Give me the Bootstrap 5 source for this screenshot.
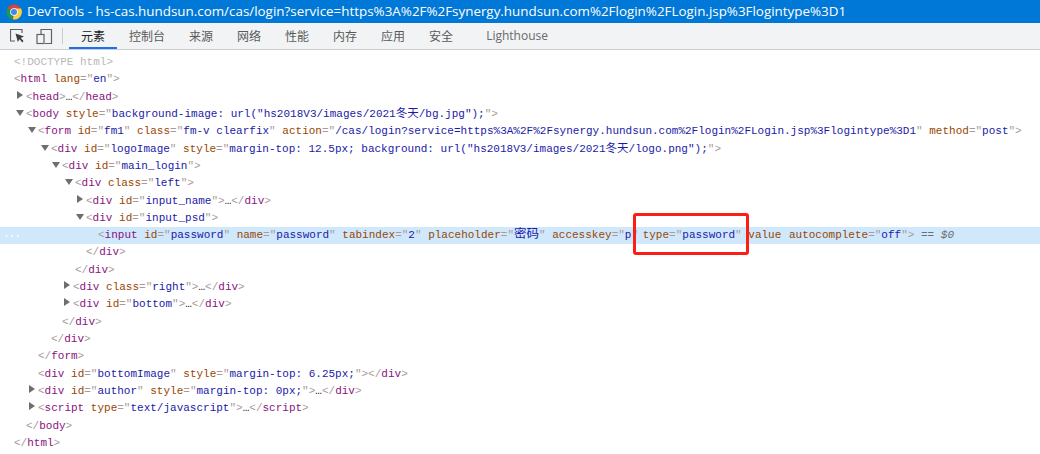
<!DOCTYPE html>
<html lang="en">
<head>
<meta charset="utf-8">
<title>DevTools</title>
<link href="https://cdn.jsdelivr.net/npm/bootstrap@5.3.0/dist/css/bootstrap.min.css" rel="stylesheet">
<script src="https://cdn.jsdelivr.net/npm/bootstrap@5.3.0/dist/js/bootstrap.bundle.min.js"></script>
<style>
html,body{width:1040px;height:454px;overflow:hidden;background:#fff}
.dt-title{height:23px;background:#0078d7;color:#fff;font:13.4px/23px "Open Sans","Noto Sans CJK SC",sans-serif;padding-left:6px;white-space:nowrap}
.dt-title svg{margin-right:5px}
.dt-tabs{height:27px;background:#f1f3f4;border-bottom:1px solid #cacdd1;padding-left:10px}
.dt-tool{width:26px;height:26px}
.dt-sep{width:1px;height:16px;background:#ccc;margin:0 6px 0 0}
.dt-tab{height:26px;padding:0 12px;font:12px/25px "Noto Sans CJK SC","Open Sans",sans-serif;color:#5a5a5a}
.dt-tab.on{color:#202124;border-bottom:2px solid #1a73e8}
.dt-tab.lh{margin-left:9px;font-family:"Open Sans",sans-serif;color:#6a6a6a}
.dom{padding-top:4px;font:11px/17.32px "Liberation Mono","Noto Sans CJK SC",monospace;color:#222;position:relative}
.ln{height:17.32px;white-space:pre;position:relative}
.ln.sel{background:#cfe8fc}
.i14{padding-left:14px}.i25{padding-left:26px}.i38{padding-left:38px}.i50{padding-left:51px}.i62{padding-left:62px}.i73{padding-left:73px}.i75{padding-left:75px}.i86{padding-left:86px}.i98{padding-left:98px}
.tw{display:inline-block;width:0;height:0;vertical-align:1px}
.tw.r{border-left:6px solid #6e6e6e;border-top:4px solid transparent;border-bottom:4px solid transparent;margin-left:-9px;margin-right:3px}
.tw.d{border-top:6px solid #6e6e6e;border-left:4px solid transparent;border-right:4px solid transparent;margin-left:-10px;margin-right:2px}
.b{color:#a89a9a}.t{color:#881280}.n{color:#994500}.v{color:#1a1aa6}.c{color:#b8b8b8}
.cjk{font-size:12.5px;line-height:1}
.cjs{font-size:11.5px;line-height:1}
.pull{margin-left:-2px}
.push{margin-left:1px}
.eq{color:#6e6e6e}.zero{font-style:italic;color:#6e6e6e}
.dots{position:absolute;left:3px;top:-1px;color:#fff;font-weight:bold;letter-spacing:-1px}
.redbox{position:absolute;left:633px;top:213px;width:116px;height:42px;border:3px solid #fa1e14;border-radius:3px}
</style>
</head>
<body class="m-0 position-relative">
<div class="dt-title d-flex align-items-center">
<svg width="16" height="16" viewBox="0 0 16 16"><circle cx="8" cy="8" r="7.5" fill="#db4437"/><path d="M8 8 L1.5 4.2 A7.5 7.5 0 0 0 7 15.4 Z" fill="#0f9d58"/><path d="M8 4.5 H15 A7.5 7.5 0 0 1 7 15.4 L8 8 Z" fill="#ffcd40"/><circle cx="8" cy="8" r="3.8" fill="#fff"/><circle cx="8" cy="8" r="3" fill="#4285f4"/></svg>
<span>DevTools - hs-cas.hundsun.com/cas/login?service=https%3A%2F%2Fsynergy.hundsun.com%2Flogin%2FLogin.jsp%3Flogintype%3D1</span>
</div>
<div class="dt-tabs d-flex align-items-center">
<div class="dt-tool d-flex align-items-center"><svg width="16" height="16" viewBox="0 0 16 16" fill="none"><path d="M5 13H.5V1.5H12V5" stroke="#5f6368" stroke-width="1.2"/><path d="M5.5 5.5 L14 8.5 L10.8 10 L13.5 13 L12.3 14.5 L9.6 11.2 L7.8 14 Z" fill="#3c4043"/></svg></div>
<div class="dt-tool d-flex align-items-center"><svg width="17" height="17" viewBox="0 0 17 17" fill="none" stroke="#5f6368" stroke-width="1.2"><path d="M5 6V1.5H15.5V15.5H9"/><rect x="1" y="6.5" width="7" height="9"/></svg></div>
<div class="dt-sep"></div>
<div class="dt-tab on">元素</div><div class="dt-tab">控制台</div><div class="dt-tab">来源</div><div class="dt-tab">网络</div><div class="dt-tab">性能</div><div class="dt-tab">内存</div><div class="dt-tab">应用</div><div class="dt-tab">安全</div><div class="dt-tab lh">Lighthouse</div>
</div>
<div class="dom">
<div class="ln i14 c">&lt;!DOCTYPE html&gt;</div>
<div class="ln i14"><span class="b">&lt;</span><span class="t">html</span> <span class="n">lang</span><span class="b">="</span><span class="v">en</span><span class="b">"&gt;</span></div>
<div class="ln i25"><span class="tw r"></span><span class="b">&lt;</span><span class="t">head</span><span class="b">&gt;</span>…<span class="b">&lt;/</span><span class="t">head</span><span class="b">&gt;</span></div>
<div class="ln i25"><span class="tw d"></span><span class="b">&lt;</span><span class="t">body</span> <span class="n">style</span><span class="b">="</span><span class="v">background-image: url("hs2018V3/images/2021<span class="cjs">冬天</span>/bg.jpg");</span><span class="b">"&gt;</span></div>
<div class="ln i38"><span class="tw d"></span><span class="b">&lt;</span><span class="t">form</span> <span class="n">id</span><span class="b">="</span><span class="v">fm1</span><span class="b">"</span> <span class="n">class</span><span class="b">="</span><span class="v">fm-v clearfix</span><span class="b">"</span> <span class="n">action</span><span class="b">="</span><span class="v">/cas/login?service=https%3A%2F%2Fsynergy.hundsun.com%2Flogin%2FLogin.jsp%3Flogintype%3D1</span><span class="b">"</span> <span class="n">method</span><span class="b">="</span><span class="v">post</span><span class="b">"&gt;</span></div>
<div class="ln i50"><span class="tw d"></span><span class="b">&lt;</span><span class="t">div</span> <span class="n">id</span><span class="b">="</span><span class="v">logoImage</span><span class="b">"</span> <span class="n">style</span><span class="b">="</span><span class="v">margin-top: 12.5px; background: url("hs2018V3/images/2021<span class="cjs">冬天</span>/logo.png");</span><span class="b">"&gt;</span></div>
<div class="ln i62"><span class="tw d"></span><span class="b">&lt;</span><span class="t">div</span> <span class="n">id</span><span class="b">="</span><span class="v">main_login</span><span class="b">"&gt;</span></div>
<div class="ln i75"><span class="tw d"></span><span class="b">&lt;</span><span class="t">div</span> <span class="n">class</span><span class="b">="</span><span class="v">left</span><span class="b">"&gt;</span></div>
<div class="ln i86"><span class="tw r"></span><span class="b">&lt;</span><span class="t">div</span> <span class="n">id</span><span class="b">="</span><span class="v">input_name</span><span class="b">"&gt;</span>…<span class="b">&lt;/</span><span class="t">div</span><span class="b">&gt;</span></div>
<div class="ln i86"><span class="tw d"></span><span class="b">&lt;</span><span class="t">div</span> <span class="n">id</span><span class="b">="</span><span class="v">input_psd</span><span class="b">"&gt;</span></div>
<div class="ln i98 sel"><span class="dots">...</span><span class="b">&lt;</span><span class="t">input</span> <span class="n">id</span><span class="b">="</span><span class="v">password</span><span class="b">"</span> <span class="n">name</span><span class="b">="</span><span class="v">password</span><span class="b">"</span> <span class="n">tabindex</span><span class="b">="</span><span class="v">2</span><span class="b">"</span> <span class="n">placeholder</span><span class="b">="</span><span class="v cjk">密码</span><span class="b">"</span> <span class="n">accesskey</span><span class="b">="</span><span class="v">p</span><span class="b">"</span> <span class="n pull">type</span><span class="b">="</span><span class="v">password</span><span class="b">"</span> <span class="n">value</span> <span class="n push">autocomplete</span><span class="b">="</span><span class="v">off</span><span class="b">"&gt;</span> <span class="eq">==</span> <span class="zero">$0</span></div>
<div class="ln i86"><span class="b">&lt;/</span><span class="t">div</span><span class="b">&gt;</span></div>
<div class="ln i75"><span class="b">&lt;/</span><span class="t">div</span><span class="b">&gt;</span></div>
<div class="ln i73"><span class="tw r"></span><span class="b">&lt;</span><span class="t">div</span> <span class="n">class</span><span class="b">="</span><span class="v">right</span><span class="b">"&gt;</span>…<span class="b">&lt;/</span><span class="t">div</span><span class="b">&gt;</span></div>
<div class="ln i73"><span class="tw r"></span><span class="b">&lt;</span><span class="t">div</span> <span class="n">id</span><span class="b">="</span><span class="v">bottom</span><span class="b">"&gt;</span>…<span class="b">&lt;/</span><span class="t">div</span><span class="b">&gt;</span></div>
<div class="ln i62"><span class="b">&lt;/</span><span class="t">div</span><span class="b">&gt;</span></div>
<div class="ln i50"><span class="b">&lt;/</span><span class="t">div</span><span class="b">&gt;</span></div>
<div class="ln i38"><span class="b">&lt;/</span><span class="t">form</span><span class="b">&gt;</span></div>
<div class="ln i38"><span class="b">&lt;</span><span class="t">div</span> <span class="n">id</span><span class="b">="</span><span class="v">bottomImage</span><span class="b">"</span> <span class="n">style</span><span class="b">="</span><span class="v">margin-top: 6.25px;</span><span class="b">"&gt;&lt;/</span><span class="t">div</span><span class="b">&gt;</span></div>
<div class="ln i38"><span class="tw r"></span><span class="b">&lt;</span><span class="t">div</span> <span class="n">id</span><span class="b">="</span><span class="v">author</span><span class="b">"</span> <span class="n">style</span><span class="b">="</span><span class="v">margin-top: 0px;</span><span class="b">"&gt;</span>…<span class="b">&lt;/</span><span class="t">div</span><span class="b">&gt;</span></div>
<div class="ln i38"><span class="tw r"></span><span class="b">&lt;</span><span class="t">script</span> <span class="n">type</span><span class="b">="</span><span class="v">text/javascript</span><span class="b">"&gt;</span>…<span class="b">&lt;/</span><span class="t">script</span><span class="b">&gt;</span></div>
<div class="ln i25"><span class="b">&lt;/</span><span class="t">body</span><span class="b">&gt;</span></div>
<div class="ln i14"><span class="b">&lt;/</span><span class="t">html</span><span class="b">&gt;</span></div>
</div>
<div class="redbox"></div>
</body>
</html>
